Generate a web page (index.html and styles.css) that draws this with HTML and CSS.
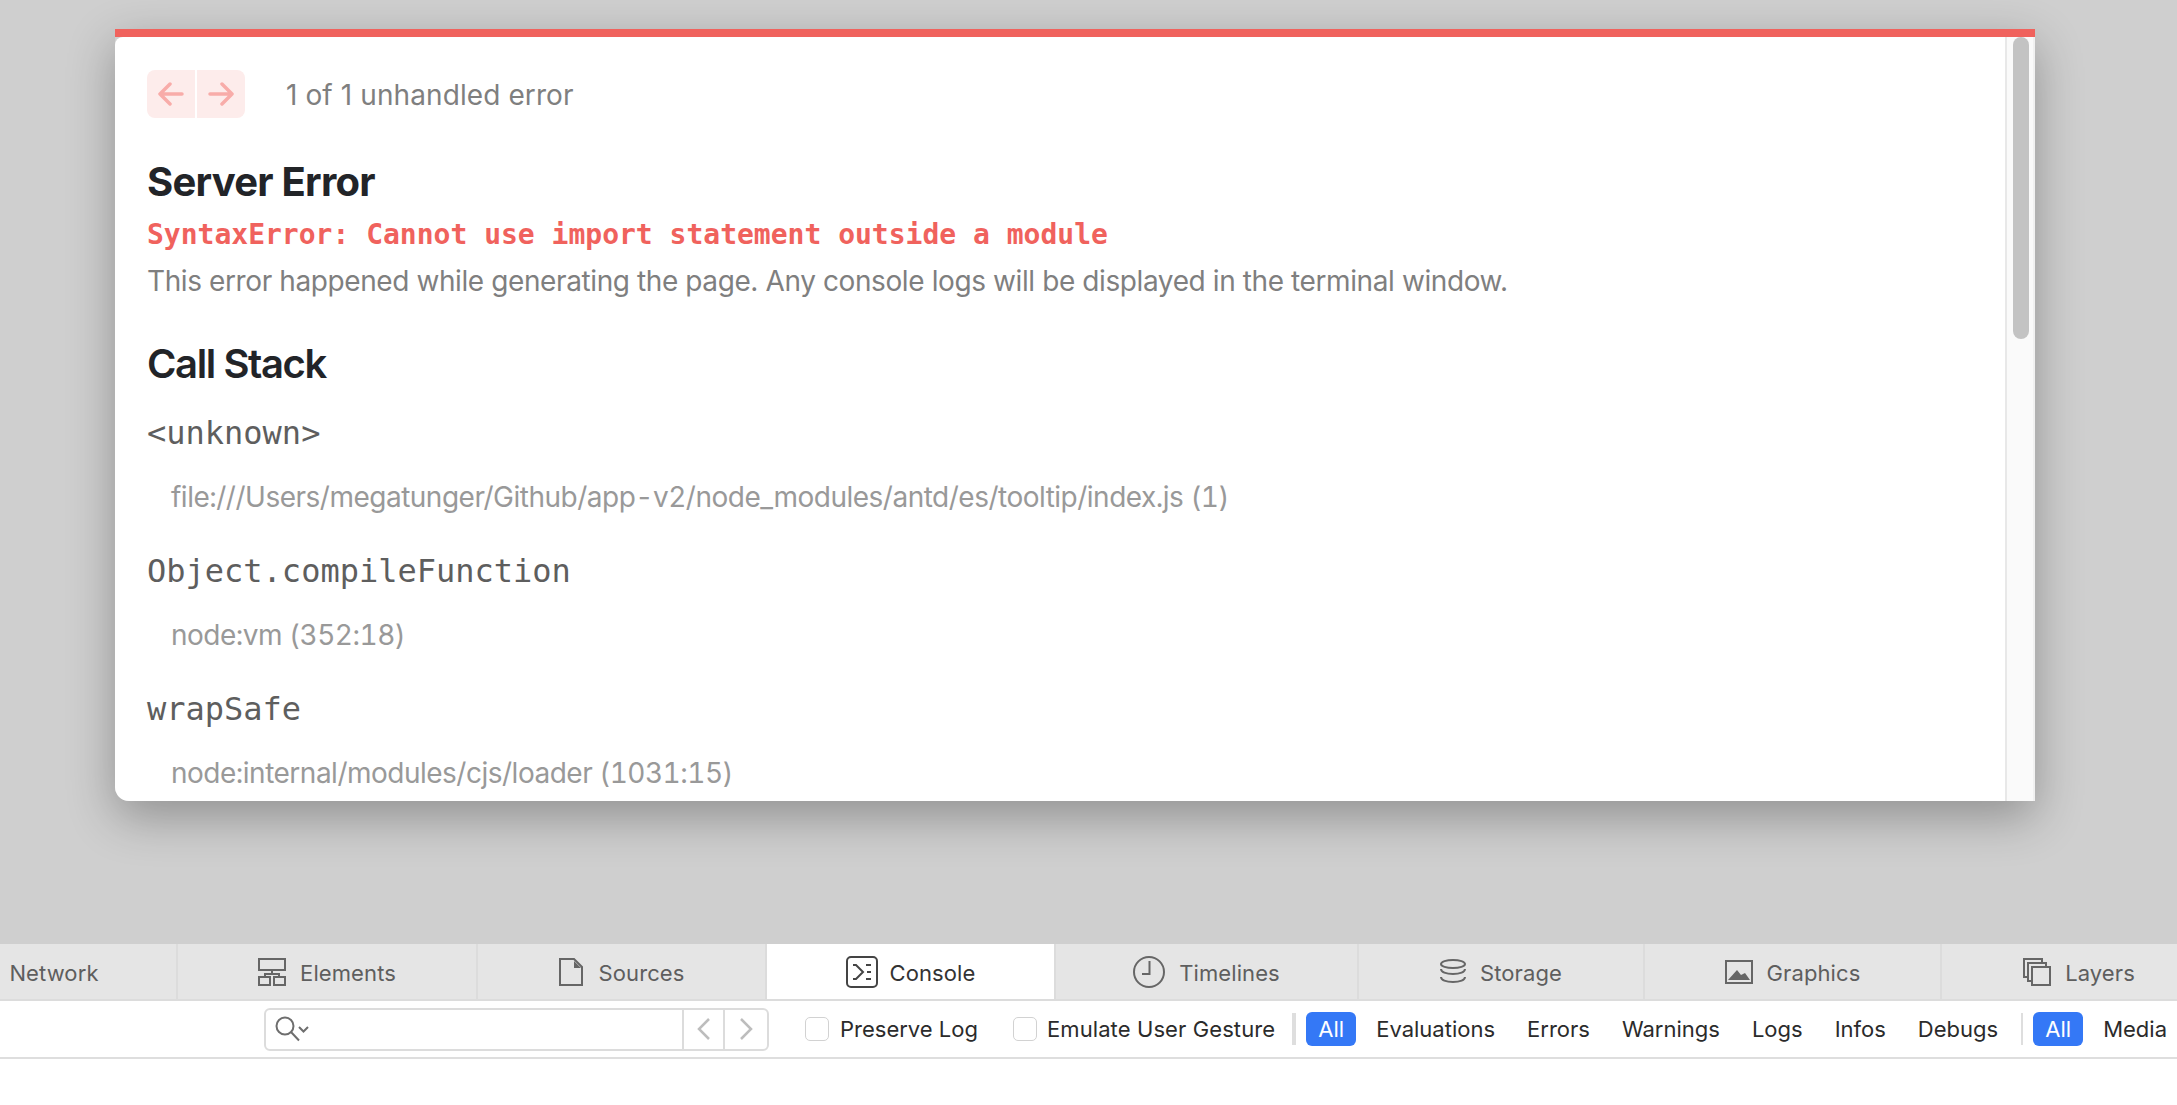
FILE: index.html
```html
<!DOCTYPE html>
<html lang="en">
<head>
<meta charset="utf-8">
<title>Server Error</title>
<link rel="stylesheet" href="styles.css">
</head>
<body>
<div class="backdrop">
  <section class="dialog">
    <div class="dialog-bar"></div>
    <div class="dialog-main">
      <div class="dialog-content">
        <div class="pager">
          <div class="pager-buttons">
            <span class="pager-btn"><svg width="26" height="24" viewBox="0 0 26 24"><path d="M24 12H2M12 2 2 12l10 10" /></svg></span>
            <span class="pager-btn"><svg width="26" height="24" viewBox="0 0 26 24"><path d="M2 12h22M14 2l10 10-10 10" /></svg></span>
          </div>
          <span class="pager-text">1 of 1 unhandled error</span>
        </div>
        <h1 class="title">Server Error</h1>
        <p class="error-name">SyntaxError: Cannot use import statement outside a module</p>
        <p class="error-note">This error happened while generating the page. Any console logs will be displayed in the terminal window.</p>
        <h2 class="stack-title">Call Stack</h2>
        <div class="frame">
          <h3 class="frame-fn">&lt;unknown&gt;</h3>
          <p class="frame-loc">file:///Users/megatunger/Github/app-v2/node_modules/antd/es/tooltip/index.js (1)</p>
        </div>
        <div class="frame">
          <h3 class="frame-fn">Object.compileFunction</h3>
          <p class="frame-loc">node:vm (352:18)</p>
        </div>
        <div class="frame">
          <h3 class="frame-fn">wrapSafe</h3>
          <p class="frame-loc">node:internal/modules/cjs/loader (1031:15)</p>
        </div>
      </div>
      <div class="scrollbar"><div class="thumb"></div></div>
    </div>
  </section>
</div>
<nav class="tabs">
  <div class="tab tab-network"><span>Network</span></div>
  <div class="tab tab-elements">
    <svg class="ico" width="28" height="28" viewBox="0 0 28 28"><path d="M1 1h26v11H1zM14 12v4M7 19v-3h14v3M1 19h11v8H1zM16 19h11v8H16z"/></svg>
    <span>Elements</span>
  </div>
  <div class="tab tab-sources">
    <svg class="ico" width="24" height="28" viewBox="0 0 24 28"><path d="M1 1h14l8 8v18H1z"/><path class="fill" d="M15 3v7h7z"/></svg>
    <span>Sources</span>
  </div>
  <div class="tab tab-console active">
    <svg class="ico" width="32" height="32" viewBox="0 0 32 32"><rect x="1" y="1" width="30" height="30" rx="4"/><path d="M7 9h3l7 7-7 7H7M20 9h5M21 16h4M20 23h5"/></svg>
    <span>Console</span>
  </div>
  <div class="tab tab-timelines">
    <svg class="ico" width="32" height="32" viewBox="0 0 32 32"><circle cx="16" cy="16" r="15"/><path d="M16.500 5v13H9"/></svg>
    <span>Timelines</span>
  </div>
  <div class="tab tab-storage">
    <svg class="ico" width="26" height="25" viewBox="0 0 26 25"><ellipse cx="13" cy="5" rx="12" ry="4"/><path d="M1 10c0 3 5 5 12 5s12-2 12-5M1 18c0 3 5 5 12 5s12-2 12-5"/></svg>
    <span>Storage</span>
  </div>
  <div class="tab tab-graphics">
    <svg class="ico" width="28" height="24" viewBox="0 0 28 24"><rect x="1" y="1" width="26" height="22"/><path class="fill" d="M3 20l9-10 4 5 4-2 5 7z"/></svg>
    <span>Graphics</span>
  </div>
  <div class="tab tab-layers">
    <svg class="ico" width="28" height="28" viewBox="0 0 28 28"><path d="M19 4V1H1v18h3M23 8V5H5v18h4M9 9h18v18H9z"/></svg>
    <span>Layers</span>
  </div>
</nav>
<div class="toolbar">
  <div class="search">
    <div class="search-field">
      <svg class="search-ico" width="36" height="26" viewBox="0 0 36 26"><circle cx="10" cy="10" r="8.500"/><path d="M16 16l8 8.500M24 11l4.500 4.500L33 11"/></svg>
    </div>
    <span class="search-step"><svg width="14" height="24" viewBox="0 0 14 24"><path d="M12 2 2 12l10 10"/></svg></span>
    <span class="search-step search-step-last"><svg width="14" height="24" viewBox="0 0 14 24"><path d="M2 2l10 10L2 22"/></svg></span>
  </div>
  <label class="check check-first"><span class="box"></span>Preserve Log</label>
  <label class="check check-second"><span class="box"></span>Emulate User Gesture</label>
  <span class="sep sep-thick"></span>
  <div class="filters">
    <span class="pill">All</span>
    <span class="filter">Evaluations</span>
    <span class="filter">Errors</span>
    <span class="filter">Warnings</span>
    <span class="filter">Logs</span>
    <span class="filter">Infos</span>
    <span class="filter">Debugs</span>
  </div>
  <span class="sep sep-thin"></span>
  <div class="filters">
    <span class="pill">All</span>
    <span class="filter">Media</span>
  </div>
</div>
<div class="console-area"></div>
</body>
</html>
```

FILE: styles.css
```css
* { box-sizing: border-box; }
html, body { margin: 0; height: 100%; }
body {
  width: 2177px;
  height: 1105px;
  overflow: hidden;
  background: #fff;
  font-family: Inter, "Noto Sans", sans-serif;
  display: flex;
  flex-direction: column;
}
.backdrop {
  height: 944px;
  flex: none;
  padding: 29px 142px 0 115px;
  background: #cfcfcf;
  overflow: hidden;
}
.dialog {
  height: 772px;
  display: flex;
  flex-direction: column;
  border-radius: 0 0 0 14px;
  box-shadow: 0 16px 48px rgba(0, 0, 0, .3);
}
.dialog-bar { flex: none; height: 8px; background: #f0625d; }
.dialog-main {
  flex: 1;
  min-height: 0;
  display: flex;
  background: #fff;
  border-radius: 8px 0 0 14px;
  overflow: hidden;
}
.dialog-content {
  flex: 1;
  min-width: 0;
  padding: 33px 32px 0;
  overflow: hidden;
}
.scrollbar {
  flex: none;
  width: 30px;
  background: #fafafa;
  border-left: 2px solid #e8e8e8;
  border-right: 2px solid #f1f1f1;
  padding: 0 4px 0 6px;
}
.thumb {
  height: 302px;
  background: #c3c3c3;
  border-radius: 8px;
}
.pager {
  display: flex;
  align-items: center;
  height: 48px;
}
.pager-buttons {
  display: flex;
  gap: 2px;
  width: 98px;
  height: 48px;
  margin-right: 41px;
}
.pager-btn {
  flex: 1;
  display: flex;
  align-items: center;
  justify-content: center;
  background: #fdeceb;
}
.pager-btn:first-child { border-radius: 8px 0 0 8px; }
.pager-btn:last-child { border-radius: 0 8px 8px 0; }
.pager-btn svg { fill: none; stroke: #f8aca9; stroke-width: 3.500; stroke-linecap: round; stroke-linejoin: round; }
.pager-text {
  font-size: 28px;
  line-height: 36px;
  color: #7f7f7f;
  letter-spacing: .1px;
  padding-top: 2px;
}
.title {
  margin: 39px 0 0;
  font-size: 40px;
  line-height: 50px;
  font-weight: 700;
  color: #222428;
  letter-spacing: -.75px;
}
.error-name {
  margin: 10px 0 0;
  font-family: "DejaVu Sans Mono", monospace;
  font-size: 28px;
  line-height: 36px;
  font-weight: 700;
  color: #f0625d;
}
.error-note {
  margin: 10px 0 0;
  font-size: 28px;
  line-height: 36px;
  color: #7f7f7f;
  letter-spacing: -.4px;
}
.stack-title {
  margin: 40px 0 0;
  font-size: 40px;
  line-height: 50px;
  font-weight: 600;
  color: #222428;
  letter-spacing: -1.4px;
}
.frame { height: 138px; padding-top: 24px; }
.frame-fn {
  margin: 0;
  font-family: "DejaVu Sans Mono", monospace;
  font-size: 32px;
  line-height: 40px;
  font-weight: 400;
  color: #5e5e5e;
}
.frame-loc {
  margin: 26px 0 0 24px;
  font-size: 28px;
  line-height: 36px;
  color: #999;
  letter-spacing: -.5px;
  font-variant-numeric: tabular-nums;
}
.tabs {
  flex: none;
  height: 57px;
  margin-left: -68px;
  width: 2284px;
  display: flex;
  background: #e5e5e5;
  border-bottom: 2px solid #dcdcdc;
}
.tab {
  flex: none;
  display: flex;
  align-items: center;
  justify-content: center;
  gap: 14px;
  border-right: 2px solid #dcdcdc;
  font-size: 22px;
  letter-spacing: .1px;
  color: #5e5e5e;
}
.tab span { padding-top: 2px; }
.tab.active { background: #fff; color: #333; }
.tab-network { width: 246px; }
.tab-elements { width: 300px; }
.tab-sources { width: 289px; gap: 16px; }
.tab-console { width: 289px; gap: 12px; }
.tab-timelines { width: 303px; }
.tab-storage { width: 286px; }
.tab-graphics { width: 297px; }
.tab-layers { width: 274px; border-right: 0; }
.ico { flex: none; fill: none; stroke: #666; stroke-width: 2; }
.active .ico { stroke: #444; }
.ico .fill { fill: #666; stroke: none; }
.toolbar {
  flex: none;
  height: 58px;
  display: flex;
  align-items: center;
  padding-left: 264px;
  border-bottom: 2px solid #dedede;
  font-size: 22px;
  color: #2b2b2b;
  white-space: nowrap;
  overflow: hidden;
}
.search {
  flex: none;
  display: flex;
  width: 505px;
  height: 43px;
  border: 2px solid #dcdcdc;
  border-radius: 6px;
}
.search-field { flex: 1; display: flex; align-items: center; padding-left: 9px; }
.search-ico { fill: none; stroke: #6e6e6e; stroke-width: 2; }
.search-step {
  flex: none;
  width: 41px;
  display: flex;
  align-items: center;
  justify-content: center;
  border-left: 2px solid #dcdcdc;
}
.search-step-last { width: 44px; }
.search-step svg { fill: none; stroke: #bdbdbd; stroke-width: 2.500; }
.check { display: flex; align-items: center; gap: 11px; }
.check-first { margin-left: 36px; }
.check-second { margin-left: 35px; gap: 10px; letter-spacing: .1px; }
.box {
  flex: none;
  width: 24px;
  height: 24px;
  border: 1px solid #d2d2d2;
  border-radius: 5px;
  background: #fff;
}
.sep { flex: none; height: 32px; background: #dedede; }
.sep-thick { width: 4px; margin: 0 10px 0 17px; }
.sep-thin { width: 2px; margin: 0 10px 0 23px; }
.filters { display: flex; align-items: center; }
.filter { margin-left: 32px; }
.pill + .filter { margin-left: 20px; }
.pill {
  width: 50px;
  height: 34px;
  display: flex;
  align-items: center;
  justify-content: center;
  background: #3478f6;
  color: #fff;
  border-radius: 6px;
}
.console-area { flex: 1; background: #fff; }
```
